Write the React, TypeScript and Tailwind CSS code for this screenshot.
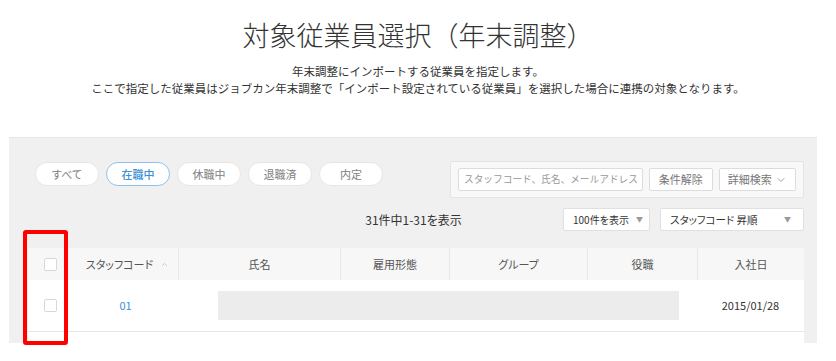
import { ChevronDown, ChevronUp } from "lucide-react";

const filters = ["すべて", "在職中", "休職中", "退職済", "内定"];
const cols = "grid grid-cols-[45px_105px_162px_109px_138px_110px_107px]";

function Checkbox() {
  return <div className="w-[13px] h-[13px] rounded-[2px] border border-[#d8d8d8] bg-white" />;
}

export default function App() {
  return (
    <div
      className="relative w-[836px] h-[361px] overflow-hidden bg-white text-[#333]"
      style={{ fontFamily: '"Noto Sans CJK JP", "Noto Sans", sans-serif' }}
    >
      <h1 className="pt-[19px] text-center text-[27px] leading-[32px] font-light text-[#333]">
        対象従業員選択（年末調整）
      </h1>
      <div className="mt-[12px] text-center text-[11.5px] leading-[17px] text-[#333]">
        <p>年末調整にインポートする従業員を指定します。</p>
        <p>ここで指定した従業員はジョブカン年末調整で「インポート設定されている従業員」を選択した場合に連携の対象となります。</p>
      </div>

      <div className="ml-[9px] mt-[40px] w-[808px] h-[206px] bg-[#f0f0f0] border-t border-[#e6e6e6] overflow-hidden [font-feature-settings:'palt']">
        <div className="flex justify-between items-start pl-[26px] pr-[13px] pt-[23px]">
          <div className="flex gap-[7px] mt-[1px]">
            {filters.map((f) => (
              <div
                key={f}
                className={`w-[64px] h-[24px] flex items-center justify-center rounded-full bg-white border text-[11px] ${
                  f === "在職中" ? "border-[#8cc2ea] text-[#3d8fd6] font-medium" : "border-[#e6e6e6] text-[#808080]"
                }`}
              >
                {f}
              </div>
            ))}
          </div>
          <div className="w-[354px] h-[37px] flex items-center gap-[6px] px-[7px] bg-[#f8f8f8] border border-[#e4e4e4] rounded-[2px]">
            <div className="w-[186px] h-[23px] flex items-center px-[5px] bg-white border border-[#dcdcdc] rounded-[2px] text-[9.7px] text-[#999] whitespace-nowrap overflow-hidden [font-feature-settings:normal]">
              スタッフコード、氏名、メールアドレス
            </div>
            <div className="w-[64px] h-[23px] flex items-center justify-center bg-white border border-[#dcdcdc] rounded-[2px] text-[11px] text-[#777]">
              条件解除
            </div>
            <div className="w-[78px] h-[23px] flex items-center justify-center gap-[3px] bg-white border border-[#dcdcdc] rounded-[2px] text-[11px] text-[#777]">
              詳細検索
              <ChevronDown size={12} strokeWidth={1.5} className="text-[#888]" />
            </div>
          </div>
        </div>

        <div className="grid grid-cols-[1fr_auto_1fr] items-center pr-[13px] mt-[10px]">
          <div />
          <div className="text-[12px] text-[#333] pl-[14px]">31件中1-31を表示</div>
          <div className="flex justify-end gap-[10px]">
            <div className="w-[87px] h-[23px] flex items-center justify-between pl-[9px] pr-[6px] bg-white border border-[#e0e0e0] rounded-[2px] text-[10px] text-[#333] whitespace-nowrap">
              100件を表示
              <span className="text-[7px] text-[#999]">▼</span>
            </div>
            <div className="w-[144px] h-[23px] flex items-center justify-between pl-[9px] pr-[12px] bg-white border border-[#e0e0e0] rounded-[2px] text-[10.5px] text-[#333] whitespace-nowrap">
              スタッフコード 昇順
              <span className="text-[7px] text-[#999]">▼</span>
            </div>
          </div>
        </div>

        <div className="ml-[19px] mt-[17px] w-[776px] bg-white">
          <div className={`${cols} h-[32px] bg-[#f7f7f7] text-[11px] text-[#555]`}>
            <div className="flex items-center justify-center">
              <Checkbox />
            </div>
            <div className="flex items-center justify-center gap-[7px] pl-[4px]">
              スタッフコード
              <ChevronUp size={9} strokeWidth={1.5} className="text-[#aaa]" />
            </div>
            {["氏名", "雇用形態", "グループ", "役職", "入社日"].map((h) => (
              <div key={h} className="flex items-center justify-center border-l border-[#e8e8e8]">
                {h}
              </div>
            ))}
          </div>
          <div className={`${cols} h-[52px] border-b border-[#e6e6e6] text-[11px]`}>
            <div className="flex items-center justify-center">
              <Checkbox />
            </div>
            <div className="flex items-center justify-center text-[#3d8fd6]">01</div>
            <div className="col-span-4 flex items-center pl-[40px] pr-[18px]">
              <div className="w-full h-[29px] bg-[#ececec]" />
            </div>
            <div className="flex items-center justify-center text-[#333]">2015/01/28</div>
          </div>
          <div className="h-[20px]" />
        </div>
      </div>

      <div className="absolute left-[23px] top-[230px] w-[45px] h-[115px] border-[4px] border-[#ff0000] rounded-[3px]" />
    </div>
  );
}
